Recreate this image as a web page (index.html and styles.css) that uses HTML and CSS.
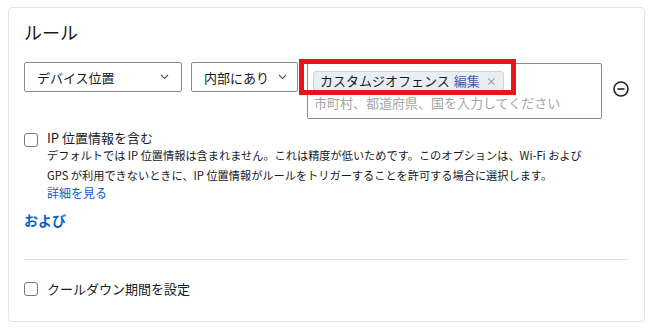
FILE: index.html
```html
<!DOCTYPE html>
<html lang="ja">
<head>
    <meta charset="UTF-8">
    <meta name="viewport" content="width=device-width, initial-scale=1.0">
    <title>ルール</title>
    <link rel="stylesheet" href="styles.css">
</head>
<body>
    <div class="card">
        <h2 class="title">ルール</h2>

        <div class="rule-row">
            <div class="select wide">
                <span>デバイス位置</span>
                <svg class="chevron" width="9" height="6" viewBox="0 0 9 6"><path d="M1 1l3.5 3.5L8 1" fill="none" stroke="#555" stroke-width="1.1"/></svg>
            </div>
            <div class="select">
                <span>内部にあり</span>
                <svg class="chevron" width="9" height="6" viewBox="0 0 9 6"><path d="M1 1l3.5 3.5L8 1" fill="none" stroke="#555" stroke-width="1.1"/></svg>
            </div>
            <div class="token-input">
                <span class="chip">カスタムジオフェンス<span class="chip-edit">編集</span><span class="chip-x">×</span></span>
                <div class="placeholder">市町村、都道府県、国を入力してください</div>
                <div class="highlight"></div>
            </div>
            <div class="remove">
                <svg width="16" height="16" viewBox="0 0 16 16"><circle cx="8" cy="8" r="7" fill="none" stroke="#222" stroke-width="1.6"/><path d="M4.5 8h7" stroke="#222" stroke-width="1.6"/></svg>
            </div>
        </div>

        <label class="check top"><span class="box"></span>IP 位置情報を含む</label>
        <p class="desc">デフォルトでは IP 位置情報は含まれません。これは精度が低いためです。このオプションは、Wi-Fi および<br>GPS が利用できないときに、IP 位置情報がルールをトリガーすることを許可する場合に選択します。</p>
        <a class="more" href="#">詳細を見る</a>

        <div class="and">および</div>

        <hr class="divider">

        <label class="check"><span class="box"></span>クールダウン期間を設定</label>
    </div>
</body>
</html>
```

FILE: styles.css
```css
body { margin: 0; background: #fff; color: #16191f; font-family: "Noto Sans CJK JP", "Noto Sans", sans-serif; }

/* CARTE */
.card {
    margin: 7px 8px 0;
    height: 315px;
    box-sizing: border-box;
    border: 1px solid #e4e4e4;
    border-radius: 4px;
    padding: 12px 15px 0;
}
.title { font-size: 18px; font-weight: normal; line-height: 24px; margin: 0 0 18px; }

/* LIGNE DE REGLE */
.rule-row { display: flex; align-items: flex-start; }
.rule-row > * { flex-shrink: 0; }
.select {
    display: flex;
    align-items: center;
    justify-content: space-between;
    gap: 9px;
    height: 30px;
    box-sizing: border-box;
    border: 1px solid #8d8d8d;
    border-radius: 2px;
    padding: 0 10px 0 12px;
    margin-right: 9px;
    font-size: 13px;
    white-space: nowrap;
}
.select.wide { width: 158px; padding-right: 12px; }
.chevron { display: block; }

.token-input {
    position: relative;
    width: 295px;
    height: 56px;
    box-sizing: border-box;
    margin-top: 1px;
    border: 1px solid #8d8d8d;
    border-radius: 2px;
    padding: 3px 5px 0;
}
.chip {
    display: inline-flex;
    align-items: center;
    height: 20px;
    box-sizing: border-box;
    padding: 0 6px;
    background: #e9eef4;
    border: 1px solid #c9d3df;
    border-radius: 3px;
    font-size: 13px;
}
.chip-edit { color: #4b58a6; margin-left: 4px; }
.chip-x { color: #8a8a8a; font-size: 11px; margin-left: 6px; }
.placeholder { color: #a6a6a6; font-size: 13px; line-height: 18px; margin-top: 3px; padding-left: 1px; white-space: nowrap; }

/* CADRE ROUGE */
.highlight {
    position: absolute;
    left: -9px;
    top: -5px;
    width: 217px;
    height: 36px;
    box-sizing: border-box;
    border: 5px solid #e8141c;
}

.remove { margin: 19px 0 0 11px; }
.remove svg { display: block; }

/* CASES A COCHER */
.check { display: flex; align-items: center; font-size: 13px; line-height: 18px; }
.check .box {
    width: 14px;
    height: 14px;
    box-sizing: border-box;
    border: 1px solid #777;
    border-radius: 3px;
    margin-right: 9px;
}
.check.top { align-items: flex-start; line-height: 16px; margin-top: 11px; }
.check.top .box { margin-top: 3px; }

.desc { font-size: 11.2px; line-height: 20px; margin: -2px 0 0 23px; }
.more { display: block; margin-left: 23px; font-size: 12px; line-height: 16px; color: #0b62c4; text-decoration: none; }
.and { font-size: 14px; font-weight: bold; color: #0b62c4; margin-top: 9px; line-height: 20px; }

.divider { border: none; border-top: 1px solid #e4e4e4; margin: 29px 0 20px; }
```
